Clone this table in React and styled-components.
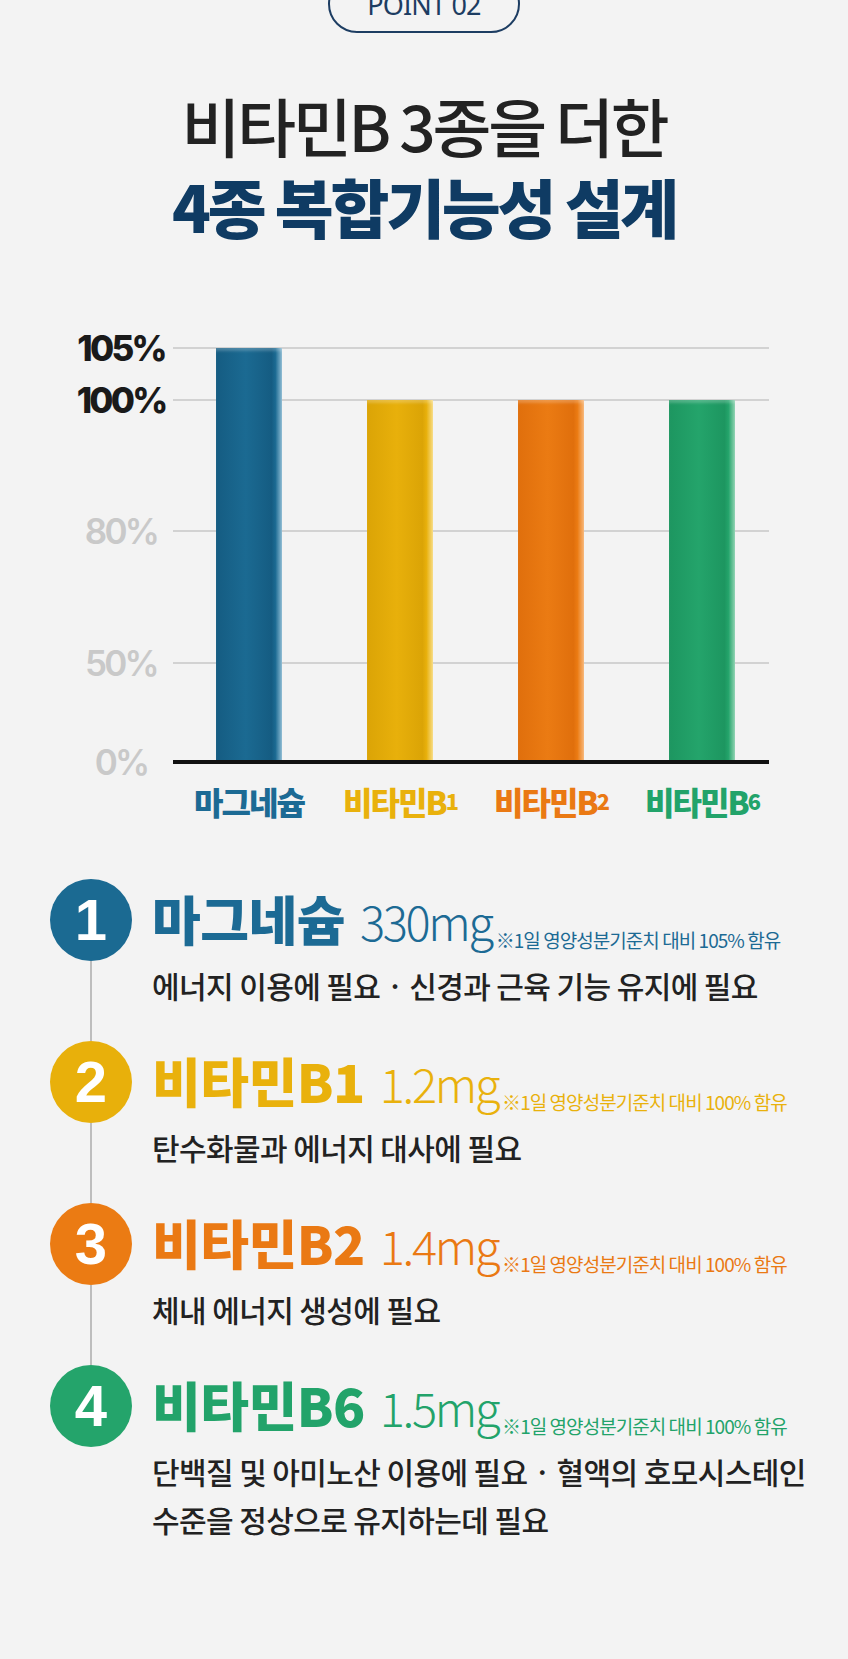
import React from 'react';
import styled, { createGlobalStyle } from 'styled-components';

const GlobalStyle = createGlobalStyle`
  html, body {
    margin: 0;
    padding: 0;
    background: #f3f3f3;
  }
  body {
    font-family: "Noto Sans CJK KR", "Noto Sans", sans-serif;
    overflow-x: hidden;
  }
`;

const KR = '"Noto Sans CJK KR", "Noto Sans", sans-serif';

const colors = {
  blue: { base: '#1b6a92', dark: '#155c82', light: '#8fbdd4', text: '#1c6a94' },
  yellow: { base: '#e8b00b', dark: '#dba406', light: '#f7dc86', text: '#e9b10c' },
  orange: { base: '#eb7b13', dark: '#e06f0c', light: '#f7b77a', text: '#ea7913' },
  green: { base: '#24a46b', dark: '#1d9660', light: '#8fd3b2', text: '#22a36a' },
};

const Page = styled.div`
  width: 848px;
  min-height: 1659px;
  margin: 0 auto;
  display: flex;
  flex-direction: column;
  align-items: center;
`;

const Pill = styled.div`
  box-sizing: border-box;
  width: 192px;
  height: 58px;
  margin-top: -25px;
  border: 2px solid #1d3d62;
  border-radius: 29px;
  display: flex;
  align-items: center;
  justify-content: center;
  font-family: "Noto Sans", sans-serif;
  font-size: 27px;
  color: #1d3d62;
  letter-spacing: -0.03em;
`;

const Title = styled.h1`
  margin: 51px 0 0;
  font-family: ${KR};
  font-size: 64px;
  line-height: 81px;
  font-weight: 500;
  letter-spacing: -0.05em;
  color: #222;
  text-align: center;
`;

const TitleStrong = styled.span`
  display: block;
  font-weight: 900;
  color: #0f3b63;
`;

const Chart = styled.div`
  align-self: flex-start;
  margin: 102px 0 0 69px;
  display: grid;
  grid-template-columns: 104px 596px;
`;

const YAxis = styled.div`
  position: relative;
  height: 412px;
`;

const YLabel = styled.span`
  position: absolute;
  left: 0;
  right: 0;
  transform: translateY(-50%);
  text-align: center;
  font-family: Inter, "Noto Sans", sans-serif;
  font-size: 35px;
  line-height: 1;
  letter-spacing: -0.08em;
  font-weight: ${(p) => (p.$strong ? 800 : 600)};
  color: ${(p) => (p.$strong ? '#1a1a1a' : '#c9c9c9')};
`;

const Plot = styled.div`
  position: relative;
  height: 412px;
  border-bottom: 4px solid #111;
  display: flex;
  align-items: flex-end;
  gap: 85px;
  padding-left: 43px;
`;

const GridLine = styled.div`
  position: absolute;
  left: 0;
  right: 0;
  height: 2px;
  background: #d2d2d2;
`;

const Bar = styled.div`
  position: relative;
  z-index: 1;
  width: 66px;
  background: linear-gradient(
    90deg,
    ${(p) => colors[p.$c].dark} 0%,
    ${(p) => colors[p.$c].base} 45%,
    ${(p) => colors[p.$c].dark} 84%,
    ${(p) => colors[p.$c].base} 90%,
    ${(p) => colors[p.$c].light} 100%
  );
  box-shadow: inset 0 4px 3px -1px rgba(255, 255, 255, 0.22);
`;

const LabelRow = styled.div`
  grid-column: 2;
  display: flex;
  gap: 85px;
  padding-left: 43px;
  margin-top: 19px;
`;

const BarLabel = styled.div`
  width: 66px;
  display: flex;
  justify-content: center;
  white-space: nowrap;
  font-family: ${KR};
  font-size: 32px;
  line-height: 36px;
  font-weight: 900;
  letter-spacing: -0.06em;
  color: ${(p) => colors[p.$c].text};
`;

const Sub = styled.span`
  font-size: 0.68em;
`;

const List = styled.div`
  align-self: stretch;
  margin-top: 60px;
  padding-left: 50px;
  display: flex;
  flex-direction: column;
`;

const Item = styled.div`
  display: flex;
`;

const Marker = styled.div`
  width: 82px;
  flex-shrink: 0;
  display: flex;
  flex-direction: column;
  align-items: center;
`;

const Circle = styled.div`
  width: 82px;
  height: 82px;
  border-radius: 50%;
  background: ${(p) => colors[p.$c].base};
  color: #fff;
  display: flex;
  align-items: center;
  justify-content: center;
  font-family: "Liberation Sans", Arial, sans-serif;
  font-weight: 700;
  font-size: 58px;
  line-height: 1;
`;

const Connector = styled.div`
  flex: 1;
  width: 2px;
  background: #bdbdbd;
`;

const Content = styled.div`
  margin-left: 20px;
  padding-bottom: ${(p) => (p.$last ? 0 : 32)}px;
`;

const Head = styled.div`
  height: 82px;
  display: flex;
  align-items: center;
`;

const HeadLine = styled.div`
  white-space: nowrap;
  line-height: 1;
  color: ${(p) => colors[p.$c].text};
`;

const Name = styled.span`
  font-family: ${KR};
  font-size: 53px;
  font-weight: 900;
  letter-spacing: -0.01em;
  margin-right: 15px;
`;

const Dose = styled.span`
  font-family: ${KR};
  font-size: 47px;
  font-weight: 300;
  letter-spacing: -0.05em;
  margin-right: 4px;
`;

const Note = styled.span`
  font-family: ${KR};
  font-size: 19px;
  letter-spacing: -0.05em;
  vertical-align: -0.35em;
`;

const Desc = styled.p`
  margin: 0;
  white-space: nowrap;
  font-family: ${KR};
  font-size: 30px;
  line-height: 48px;
  font-weight: 500;
  letter-spacing: -0.02em;
  color: #222;
`;

const ticks = [
  { v: 105, y: 0, strong: true },
  { v: 100, y: 52, strong: true },
  { v: 80, y: 183 },
  { v: 50, y: 315 },
  { v: 0, y: 414 },
];

const bars = [
  { c: 'blue', h: 412, label: '마그네슘' },
  { c: 'yellow', h: 360, label: '비타민B', sub: '1' },
  { c: 'orange', h: 360, label: '비타민B', sub: '2' },
  { c: 'green', h: 360, label: '비타민B', sub: '6' },
];

const items = [
  {
    c: 'blue',
    name: '마그네슘',
    dose: '330mg',
    pct: '105%',
    desc: ['에너지 이용에 필요 · 신경과 근육 기능 유지에 필요'],
  },
  { c: 'yellow', name: '비타민B1', dose: '1.2mg', pct: '100%', desc: ['탄수화물과 에너지 대사에 필요'] },
  { c: 'orange', name: '비타민B2', dose: '1.4mg', pct: '100%', desc: ['체내 에너지 생성에 필요'] },
  {
    c: 'green',
    name: '비타민B6',
    dose: '1.5mg',
    pct: '100%',
    desc: ['단백질 및 아미노산 이용에 필요 · 혈액의 호모시스테인', '수준을 정상으로 유지하는데 필요'],
  },
];

export default function App() {
  return (
    <>
      <GlobalStyle />
      <Page>
        <Pill>POINT 02</Pill>
        <Title>
          비타민B 3종을 더한
          <TitleStrong>4종 복합기능성 설계</TitleStrong>
        </Title>

        <Chart>
          <YAxis>
            {ticks.map((t) => (
              <YLabel key={t.v} $strong={t.strong} style={{ top: t.y }}>
                {t.v}%
              </YLabel>
            ))}
          </YAxis>
          <Plot>
            {ticks
              .filter((t) => t.v > 0)
              .map((t) => (
                <GridLine key={t.v} style={{ top: t.y - 1 }} />
              ))}
            {bars.map((b) => (
              <Bar key={b.c} $c={b.c} style={{ height: b.h }} />
            ))}
          </Plot>
          <LabelRow>
            {bars.map((b) => (
              <BarLabel key={b.c} $c={b.c}>
                {b.label}
                {b.sub && <Sub>{b.sub}</Sub>}
              </BarLabel>
            ))}
          </LabelRow>
        </Chart>

        <List>
          {items.map((it, i) => {
            const last = i === items.length - 1;
            return (
              <Item key={it.c}>
                <Marker>
                  <Circle $c={it.c}>{i + 1}</Circle>
                  {!last && <Connector />}
                </Marker>
                <Content $last={last}>
                  <Head>
                    <HeadLine $c={it.c}>
                      <Name>{it.name}</Name>
                      <Dose>{it.dose}</Dose>
                      <Note>※1일 영양성분기준치 대비 {it.pct} 함유</Note>
                    </HeadLine>
                  </Head>
                  {it.desc.map((d) => (
                    <Desc key={d}>{d}</Desc>
                  ))}
                </Content>
              </Item>
            );
          })}
        </List>
      </Page>
    </>
  );
}
